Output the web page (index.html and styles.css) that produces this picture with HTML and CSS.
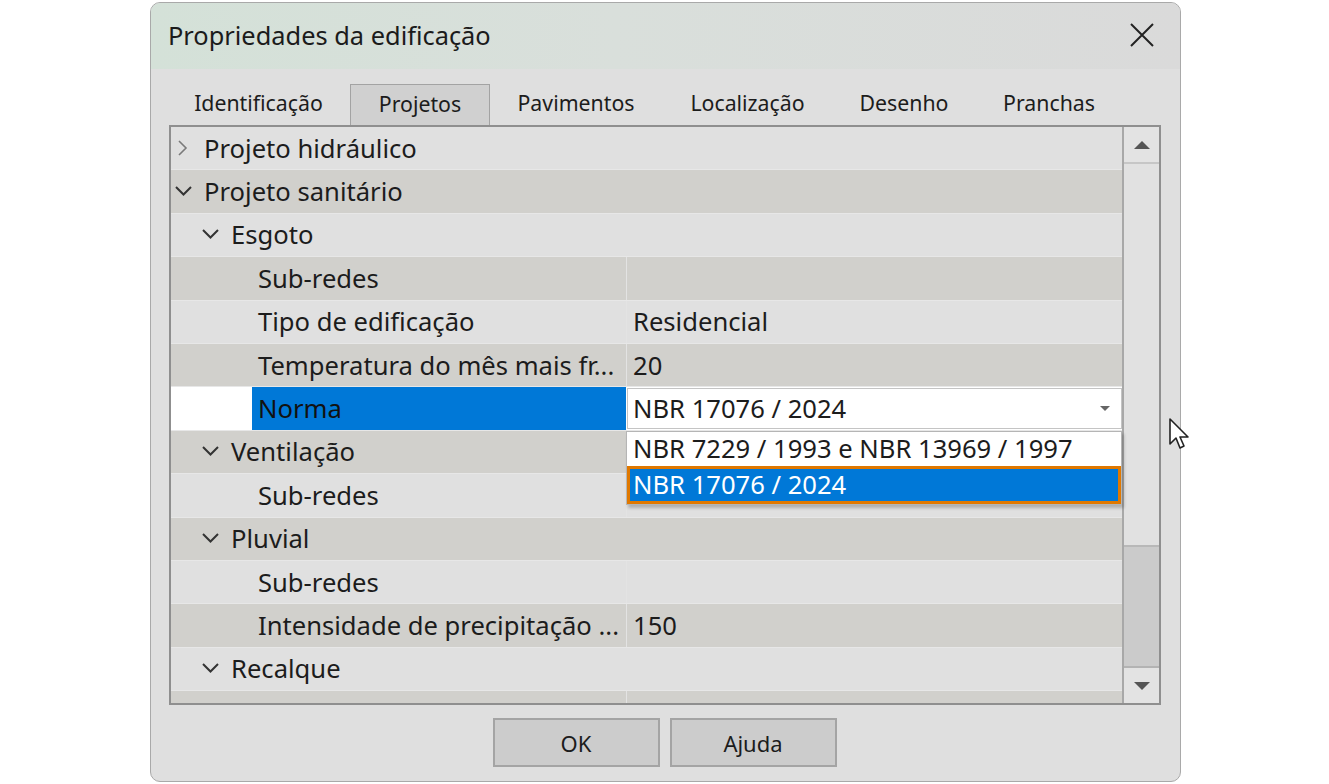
FILE: index.html
```html
<!DOCTYPE html>
<html lang="pt">
<head>
  <meta charset="UTF-8" />
  <title>Propriedades da edificação</title>
  <link rel="stylesheet" href="styles.css">
</head>
<body>
  <div class="dialog">
    <!-- Title bar -->
    <div class="titlebar">
      <span class="title">Propriedades da edificação</span>
      <svg class="close" width="26" height="26" viewBox="0 0 26 26">
        <path d="M2 2 L24 24 M24 2 L2 24" stroke="#222" stroke-width="2" fill="none"/>
      </svg>
    </div>

    <div class="content">
      <!-- Tabs -->
      <div class="tabs">
        <div class="tab t1">Identificação</div>
        <div class="tab t2 selected">Projetos</div>
        <div class="tab t3">Pavimentos</div>
        <div class="tab t4">Localização</div>
        <div class="tab t5">Desenho</div>
        <div class="tab t6">Pranchas</div>
      </div>

      <!-- Property grid -->
      <div class="panel">
        <div class="grid">
          <div class="row light cat">
            <div class="name l0">
              <svg class="chev" width="29" height="18" viewBox="0 0 29 18"><path d="M4 2 L11 9 L4 16" stroke="#7a7a7a" stroke-width="1.6" fill="none"/></svg>
              <span class="label">Projeto hidráulico</span>
            </div>
          </div>
          <div class="row dark cat">
            <div class="name l0">
              <svg class="chev" width="29" height="18" viewBox="0 0 29 18"><path d="M1 4 L8.5 11.5 L16 4" stroke="#333" stroke-width="2" fill="none"/></svg>
              <span class="label">Projeto sanitário</span>
            </div>
          </div>
          <div class="row light cat">
            <div class="name l1">
              <svg class="chev" width="29" height="18" viewBox="0 0 29 18"><path d="M1 4 L8.5 11.5 L16 4" stroke="#333" stroke-width="2" fill="none"/></svg>
              <span class="label">Esgoto</span>
            </div>
          </div>
          <div class="row dark">
            <div class="name l2"><span class="label">Sub-redes</span></div>
            <div class="value"></div>
          </div>
          <div class="row light">
            <div class="name l2"><span class="label">Tipo de edificação</span></div>
            <div class="value">Residencial</div>
          </div>
          <div class="row dark">
            <div class="name l2"><span class="label">Temperatura do mês mais fr...</span></div>
            <div class="value">20</div>
          </div>
          <div class="row selected">
            <div class="name l2"><span class="label">Norma</span></div>
            <div class="value">
              <div class="combo">
                <span>NBR 17076 / 2024</span>
                <svg width="12" height="8" viewBox="0 0 12 8"><path d="M1 1 L11 1 L6 6 Z" fill="#666"/></svg>
              </div>
            </div>
          </div>
          <div class="row dark cat">
            <div class="name l1">
              <svg class="chev" width="29" height="18" viewBox="0 0 29 18"><path d="M1 4 L8.5 11.5 L16 4" stroke="#333" stroke-width="2" fill="none"/></svg>
              <span class="label">Ventilação</span>
            </div>
          </div>
          <div class="row light">
            <div class="name l2"><span class="label">Sub-redes</span></div>
            <div class="value"></div>
          </div>
          <div class="row dark cat">
            <div class="name l1">
              <svg class="chev" width="29" height="18" viewBox="0 0 29 18"><path d="M1 4 L8.5 11.5 L16 4" stroke="#333" stroke-width="2" fill="none"/></svg>
              <span class="label">Pluvial</span>
            </div>
          </div>
          <div class="row light">
            <div class="name l2"><span class="label">Sub-redes</span></div>
            <div class="value"></div>
          </div>
          <div class="row dark">
            <div class="name l2"><span class="label">Intensidade de precipitação ...</span></div>
            <div class="value">150</div>
          </div>
          <div class="row light cat">
            <div class="name l1">
              <svg class="chev" width="29" height="18" viewBox="0 0 29 18"><path d="M1 4 L8.5 11.5 L16 4" stroke="#333" stroke-width="2" fill="none"/></svg>
              <span class="label">Recalque</span>
            </div>
          </div>
          <div class="row dark">
            <div class="name l2"><span class="label"></span></div>
            <div class="value"></div>
          </div>
        </div>

        <div class="scrollbar">
          <div class="sbtn">
            <svg width="18" height="10" viewBox="0 0 18 10"><path d="M1 9 L9 1 L17 9 Z" fill="#555"/></svg>
          </div>
          <div class="track"></div>
          <div class="thumb"></div>
          <div class="sbtn">
            <svg width="18" height="10" viewBox="0 0 18 10"><path d="M1 1 L17 1 L9 9 Z" fill="#555"/></svg>
          </div>
        </div>

        <!-- open dropdown list -->
        <div class="droplist">
          <div class="opt">NBR 7229 / 1993 e NBR 13969 / 1997</div>
          <div class="opt active">NBR 17076 / 2024</div>
        </div>
      </div>

      <!-- Buttons -->
      <div class="buttons">
        <div class="btn">OK</div>
        <div class="btn">Ajuda</div>
      </div>
    </div>
  </div>

  <svg class="cursor" width="20" height="34" viewBox="0 0 20 34">
    <path d="M1 1 L1 26 L7 20 L11 30 L15 28 L11 19 L19 19 Z" fill="#fff" stroke="#222" stroke-width="1.6" stroke-linejoin="round"/>
  </svg>
</body>
</html>
```

FILE: styles.css
```css
* { margin: 0; padding: 0; box-sizing: border-box; }
body, html {
  width: 100%;
  height: 100%;
  background: #ffffff;
  font-family: "Noto Sans", "Open Sans", sans-serif;
  color: #1c1c1c;
  overflow: hidden;
}

.dialog {
  position: relative;
  margin: 2px 0 0 150px;
  width: 1031px;
  height: 780px;
  border: 1px solid #a9a9a9;
  border-radius: 10px;
  background: #dfdfdf;
  overflow: hidden;
  display: flex;
  flex-direction: column;
}

.titlebar {
  height: 66px;
  flex: none;
  display: flex;
  align-items: center;
  justify-content: space-between;
  padding: 0 25px 0 17px;
  background: linear-gradient(to right, #d4e1d8 0%, #d9dfdb 45%, #dadada 100%);
}
.title { font-size: 25.4px; color: #1b1b1b; margin-top: -3px; }
.close { margin-top: -2px; }

.content {
  flex: 1;
  display: flex;
  flex-direction: column;
  padding: 15px 19px 0 18px;
}

/* tabs */
.tabs { display: flex; height: 41px; margin-left: -2px; }
.tab {
  flex: none;
  text-align: center;
  font-size: 21.3px;
  line-height: 38px;
  color: #1c1c1c;
}
.tab.selected {
  background: #d0d0d0;
  border: 1px solid #a3a3a3;
  border-bottom: none;
}
.t1 { width: 183px; }
.t2 { width: 140px; }
.t3 { width: 172px; }
.t4 { width: 171px; }
.t5 { width: 142px; }
.t6 { width: 148px; }

/* property grid */
.panel {
  position: relative;
  height: 580px;
  display: flex;
  border: 2px solid #8f8f8f;
  background: #dcdcdc;
}
.grid { flex: 1; overflow: hidden; }
.row {
  display: flex;
  height: 43.4px;
  font-size: 25.6px;
  border-bottom: 1px solid #e7e7e7;
}
.row.light { background: #e0e0e0; }
.row.dark { background: #d1d0cc; }
.row.selected { background: #ffffff; }

.name {
  width: 455px;
  flex: none;
  display: flex;
  align-items: center;
  white-space: nowrap;
  overflow: hidden;
}
.cat .name { width: auto; }
.l0 { padding-left: 4px; }
.l1 { padding-left: 31px; }
.l2 { padding-left: 81px; }
.chev { flex: none; }
.l2 .label { padding-left: 6px; }
.selected .label {
  flex: 1;
  align-self: stretch;
  display: flex;
  align-items: center;
  background: #0078d7;
  color: #111;
}

.value {
  flex: 1;
  display: flex;
  align-items: center;
  padding-left: 6px;
  border-left: 1px solid #e3e3e3;
  white-space: nowrap;
}
.selected .value { padding: 1px 0 1px 1px; border-left: none; }
.combo {
  flex: 1;
  align-self: stretch;
  display: flex;
  align-items: center;
  justify-content: space-between;
  padding: 0 10px 0 5px;
  background: #fff;
  border: 1px solid #c4c4c4;
}

/* scrollbar */
.scrollbar {
  width: 37px;
  flex: none;
  display: flex;
  flex-direction: column;
  background: #e1e1e1;
  border-left: 2px solid #a8a8a8;
}
.sbtn {
  height: 37px;
  flex: none;
  display: flex;
  align-items: center;
  justify-content: center;
  background: #e3e3e3;
  border-bottom: 2px solid #c6c6c6;
}
.sbtn:last-child { border-bottom: none; border-top: 2px solid #b3b3b3; }
.track { height: 383px; flex: none; border-bottom: 2px solid #b8b8b8; }
.thumb { flex: 1; background: #cbcbcb; }

/* dropdown list */
.droplist {
  position: absolute;
  left: 455px;
  top: 304px;
  width: 496px;
  background: #fff;
  border: 1px solid #b5b5b5;
  box-shadow: 2px 3px 3px rgba(0, 0, 0, 0.22);
  font-size: 25.6px;
}
.opt {
  height: 34px;
  line-height: 33px;
  padding-left: 6px;
  white-space: nowrap;
}
.opt.active {
  height: 38px;
  line-height: 31px;
  padding-left: 3px;
  background: #0078d7;
  color: #fff;
  border: 3px solid #e07800;
}

/* buttons */
.buttons {
  display: flex;
  justify-content: center;
  gap: 10px;
  padding-top: 13px;
  padding-right: 1px;
}
.btn {
  width: 167px;
  height: 49px;
  display: flex;
  align-items: center;
  justify-content: center;
  background: #cccccc;
  border: 2px solid #a4a4a4;
  font-size: 22px;
}

.cursor {
  position: absolute;
  left: 1169px;
  top: 418px;
}
```
